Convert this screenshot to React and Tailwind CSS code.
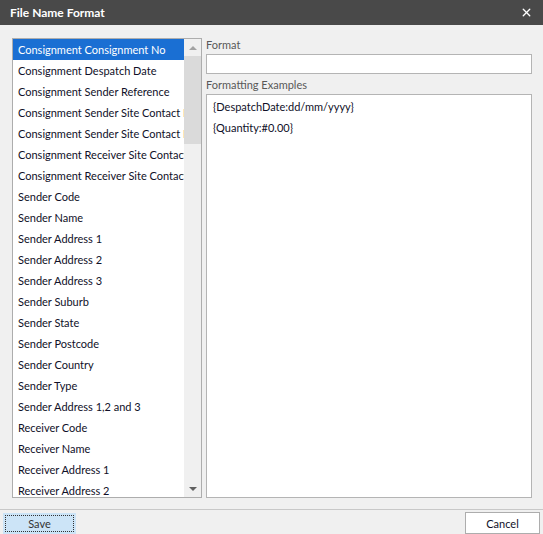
import { X } from "lucide-react";

const FIELDS = [
  "Consignment Consignment No",
  "Consignment Despatch Date",
  "Consignment Sender Reference",
  "Consignment Sender Site Contact Name",
  "Consignment Sender Site Contact Phone",
  "Consignment Receiver Site Contact Name",
  "Consignment Receiver Site Contact Phone",
  "Sender Code",
  "Sender Name",
  "Sender Address 1",
  "Sender Address 2",
  "Sender Address 3",
  "Sender Suburb",
  "Sender State",
  "Sender Postcode",
  "Sender Country",
  "Sender Type",
  "Sender Address 1,2 and 3",
  "Receiver Code",
  "Receiver Name",
  "Receiver Address 1",
  "Receiver Address 2",
  "Receiver Address 3",
];

const EXAMPLES = ["{DespatchDate:dd/mm/yyyy}", "{Quantity:#0.00}"];

function FieldList() {
  return (
    <div className="w-[190px] h-[460px] border border-[#adadad] bg-white flex overflow-hidden">
      <div className="flex-1 min-w-0 overflow-hidden">
        {FIELDS.map((f, i) => (
          <div
            key={f}
            className={`h-[21px] shrink-0 pl-[5px] leading-[21px] whitespace-nowrap overflow-hidden ${
              i === 0 ? "bg-[#1a6fd3] text-white" : "text-[#101028]"
            }`}
          >
            {f}
          </div>
        ))}
      </div>
      <div className="w-[17px] shrink-0 bg-[#f0f0f0] flex flex-col">
        <div className="h-[17px] flex items-center justify-center">
          <div className="w-0 h-0 border-l-[4px] border-r-[4px] border-b-[4px] border-l-transparent border-r-transparent border-b-[#a3a3a3]" />
        </div>
        <div className="h-[88px] bg-[#dadada]" />
        <div className="flex-1" />
        <div className="h-[17px] flex items-center justify-center">
          <div className="w-0 h-0 border-l-[4px] border-r-[4px] border-t-[4px] border-l-transparent border-r-transparent border-t-[#606060]" />
        </div>
      </div>
    </div>
  );
}

export default function App() {
  return (
    <div
      className="w-[543px] h-[534px] bg-[#f0f0f0] flex flex-col text-[11px]"
      style={{ fontFamily: 'Lato, "Noto Sans", sans-serif' }}
    >
      <div className="h-[25px] bg-[#494949] flex items-center justify-between pl-[10px] pr-[10px]">
        <span className="text-white font-bold text-[12px]">File Name Format</span>
        <X className="w-[13px] h-[13px] text-white" strokeWidth={2.5} />
      </div>

      <div className="flex gap-[4px] pl-[12px] pt-[13px]">
        <FieldList />
        <div className="w-[326px] flex flex-col">
          <div className="h-[16px] leading-[14px] text-[#585858]">Format</div>
          <div className="h-[20px] border border-[#b4b4b4] bg-white" />
          <div className="h-[20px] pt-[4px] leading-[14px] text-[#585858]">Formatting Examples</div>
          <div className="h-[404px] border border-[#b4b4b4] bg-white px-[6px] pt-[1px] flex flex-col">
            {EXAMPLES.map((e) => (
              <div key={e} className="h-[21px] shrink-0 leading-[21px] text-[#101028]">
                {e}
              </div>
            ))}
          </div>
        </div>
      </div>

      <div className="mt-[11px] border-t border-[#c8c8c8] flex items-center justify-between pl-[3px] pr-[3px] pt-[2px]">
        <div className="w-[73px] h-[21px] bg-[#cce4f7] p-[2px]">
          <div className="w-full h-full border border-dotted border-[#333] flex items-center justify-center text-[#333] leading-none">
            Save
          </div>
        </div>
        <div className="w-[75px] h-[22px] bg-white border border-[#adadad] flex items-center justify-center text-[#101028] leading-none">
          Cancel
        </div>
      </div>
    </div>
  );
}
